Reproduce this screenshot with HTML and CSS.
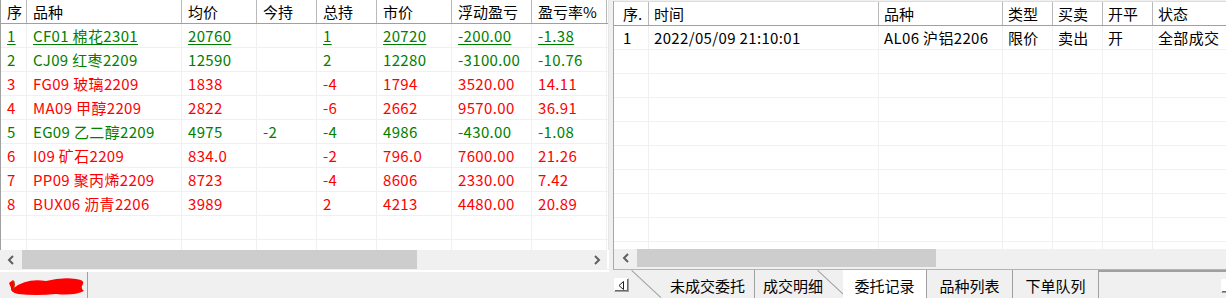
FILE: index.html
```html
<!DOCTYPE html>
<html lang="zh-CN">

<head>
    <meta charset="UTF-8" />
    <title>持仓与委托</title>
    <link rel="stylesheet" href="styles.css">
</head>

<body>
    <div class="app">
        <!-- 持仓 -->
        <div class="left">
            <div class="grid">
                <div class="row head pos-cols">
                    <div class="cell">序</div>
                    <div class="cell">品种</div>
                    <div class="cell">均价</div>
                    <div class="cell">今持</div>
                    <div class="cell">总持</div>
                    <div class="cell">市价</div>
                    <div class="cell">浮动盈亏</div>
                    <div class="cell">盈亏率%</div>
                </div>
                <div class="row pos-cols green selected">
                    <div class="cell"><u>1</u></div>
                    <div class="cell"><u>CF01 棉花2301</u></div>
                    <div class="cell"><u>20760</u></div>
                    <div class="cell"></div>
                    <div class="cell"><u>1</u></div>
                    <div class="cell"><u>20720</u></div>
                    <div class="cell"><u>-200.00</u></div>
                    <div class="cell"><u>-1.38</u></div>
                </div>
                <div class="row pos-cols green">
                    <div class="cell">2</div>
                    <div class="cell">CJ09 红枣2209</div>
                    <div class="cell">12590</div>
                    <div class="cell"></div>
                    <div class="cell">2</div>
                    <div class="cell">12280</div>
                    <div class="cell">-3100.00</div>
                    <div class="cell">-10.76</div>
                </div>
                <div class="row pos-cols red">
                    <div class="cell">3</div>
                    <div class="cell">FG09 玻璃2209</div>
                    <div class="cell">1838</div>
                    <div class="cell"></div>
                    <div class="cell">-4</div>
                    <div class="cell">1794</div>
                    <div class="cell">3520.00</div>
                    <div class="cell">14.11</div>
                </div>
                <div class="row pos-cols red">
                    <div class="cell">4</div>
                    <div class="cell">MA09 甲醇2209</div>
                    <div class="cell">2822</div>
                    <div class="cell"></div>
                    <div class="cell">-6</div>
                    <div class="cell">2662</div>
                    <div class="cell">9570.00</div>
                    <div class="cell">36.91</div>
                </div>
                <div class="row pos-cols green">
                    <div class="cell">5</div>
                    <div class="cell">EG09 乙二醇2209</div>
                    <div class="cell">4975</div>
                    <div class="cell">-2</div>
                    <div class="cell">-4</div>
                    <div class="cell">4986</div>
                    <div class="cell">-430.00</div>
                    <div class="cell">-1.08</div>
                </div>
                <div class="row pos-cols red">
                    <div class="cell">6</div>
                    <div class="cell">I09 矿石2209</div>
                    <div class="cell">834.0</div>
                    <div class="cell"></div>
                    <div class="cell">-2</div>
                    <div class="cell">796.0</div>
                    <div class="cell">7600.00</div>
                    <div class="cell">21.26</div>
                </div>
                <div class="row pos-cols red">
                    <div class="cell">7</div>
                    <div class="cell">PP09 聚丙烯2209</div>
                    <div class="cell">8723</div>
                    <div class="cell"></div>
                    <div class="cell">-4</div>
                    <div class="cell">8606</div>
                    <div class="cell">2330.00</div>
                    <div class="cell">7.42</div>
                </div>
                <div class="row pos-cols red">
                    <div class="cell">8</div>
                    <div class="cell">BUX06 沥青2206</div>
                    <div class="cell">3989</div>
                    <div class="cell"></div>
                    <div class="cell">2</div>
                    <div class="cell">4213</div>
                    <div class="cell">4480.00</div>
                    <div class="cell">20.89</div>
                </div>
                <div class="row pos-cols">
                    <div class="cell"></div><div class="cell"></div><div class="cell"></div><div class="cell"></div>
                    <div class="cell"></div><div class="cell"></div><div class="cell"></div><div class="cell"></div>
                </div>
                <div class="row pos-cols">
                    <div class="cell"></div><div class="cell"></div><div class="cell"></div><div class="cell"></div>
                    <div class="cell"></div><div class="cell"></div><div class="cell"></div><div class="cell"></div>
                </div>
            </div>

            <div class="hscroll">
                <span class="arrow arrow-left">
                    <svg width="8" height="10" viewBox="0 0 8 10"><polyline points="6,1 2,5 6,9" /></svg>
                </span>
                <div class="track"><div class="thumb thumb-pos"></div></div>
                <span class="arrow arrow-right">
                    <svg width="8" height="10" viewBox="0 0 8 10"><polyline points="2,1 6,5 2,9" /></svg>
                </span>
            </div>

            <div class="statusbar">
                <div class="acct-tab">
                    <svg width="80" height="22" viewBox="0 0 80 22">
                        <path class="mark" d="M3 9 L7 6 L9 10 L8 14 Q20 4 40 7 Q56 3 70 5 Q79 6 77 10 Q74 14 78 17 Q68 22 50 20 Q30 22 12 20 Q4 18 5 14 Z" />
                        <path class="mark-num" d="M6 8 L8 7 L8 16" />
                    </svg>
                </div>
            </div>
        </div>

        <div class="split"></div>

        <!-- 委托 -->
        <div class="right">
            <div class="frame">
                <div class="grid grid-ord">
                    <div class="row head ord-cols">
                        <div class="cell first">序.</div>
                        <div class="cell">时间</div>
                        <div class="cell">品种</div>
                        <div class="cell">类型</div>
                        <div class="cell">买卖</div>
                        <div class="cell">开平</div>
                        <div class="cell">状态</div>
                    </div>
                    <div class="row ord-cols">
                        <div class="cell first">1</div>
                        <div class="cell">2022/05/09 21:10:01</div>
                        <div class="cell">AL06 沪铝2206</div>
                        <div class="cell">限价</div>
                        <div class="cell">卖出</div>
                        <div class="cell">开</div>
                        <div class="cell">全部成交</div>
                    </div>
                    <div class="row ord-cols">
                        <div class="cell"></div><div class="cell"></div><div class="cell"></div><div class="cell"></div>
                        <div class="cell"></div><div class="cell"></div><div class="cell"></div>
                    </div>
                    <div class="row ord-cols">
                        <div class="cell"></div><div class="cell"></div><div class="cell"></div><div class="cell"></div>
                        <div class="cell"></div><div class="cell"></div><div class="cell"></div>
                    </div>
                    <div class="row ord-cols">
                        <div class="cell"></div><div class="cell"></div><div class="cell"></div><div class="cell"></div>
                        <div class="cell"></div><div class="cell"></div><div class="cell"></div>
                    </div>
                    <div class="row ord-cols">
                        <div class="cell"></div><div class="cell"></div><div class="cell"></div><div class="cell"></div>
                        <div class="cell"></div><div class="cell"></div><div class="cell"></div>
                    </div>
                    <div class="row ord-cols">
                        <div class="cell"></div><div class="cell"></div><div class="cell"></div><div class="cell"></div>
                        <div class="cell"></div><div class="cell"></div><div class="cell"></div>
                    </div>
                    <div class="row ord-cols">
                        <div class="cell"></div><div class="cell"></div><div class="cell"></div><div class="cell"></div>
                        <div class="cell"></div><div class="cell"></div><div class="cell"></div>
                    </div>
                    <div class="row ord-cols">
                        <div class="cell"></div><div class="cell"></div><div class="cell"></div><div class="cell"></div>
                        <div class="cell"></div><div class="cell"></div><div class="cell"></div>
                    </div>
                    <div class="row ord-cols">
                        <div class="cell"></div><div class="cell"></div><div class="cell"></div><div class="cell"></div>
                        <div class="cell"></div><div class="cell"></div><div class="cell"></div>
                    </div>
                    <div class="row ord-cols">
                        <div class="cell"></div><div class="cell"></div><div class="cell"></div><div class="cell"></div>
                        <div class="cell"></div><div class="cell"></div><div class="cell"></div>
                    </div>
                </div>

                <div class="hscroll hscroll-ord">
                    <span class="arrow arrow-left">
                        <svg width="8" height="10" viewBox="0 0 8 10"><polyline points="6,1 2,5 6,9" /></svg>
                    </span>
                    <div class="track"><div class="thumb thumb-ord"></div></div>
                </div>
            </div>

            <div class="tabs">
                <span class="tab-nav">
                    <svg width="7" height="9" viewBox="0 0 7 9"><polygon points="5.5,0.5 1,4.5 5.5,8.5" /></svg>
                </span>
                <div class="tab tab-first">未成交委托</div>
                <div class="tab tab-second">成交明细</div>
                <div class="tab active">委托记录</div>
                <div class="tab">品种列表</div>
                <div class="tab">下单队列</div>
                <div class="tab-rest"><span class="tab-nav tab-nav-right"></span></div>
            </div>
        </div>
    </div>
</body>

</html>
```

FILE: styles.css
```css
* {
    box-sizing: border-box;
}

html,
body {
    margin: 0;
    padding: 0;
    width: 1226px;
    height: 298px;
    overflow: hidden;
    background: #f0f0f0;
    font-family: "Noto Sans CJK SC", "Noto Sans", sans-serif;
    font-size: 15px;
    color: #000;
}

.app {
    display: flex;
    height: 298px;
}

/* ---------- grids ---------- */

.left {
    width: 609px;
    display: flex;
    flex-direction: column;
    flex-shrink: 0;
}

.grid {
    background: #ffffff;
    overflow: hidden;
}

.left .grid {
    height: 250px;
    border-left: 1px solid #a0a0a0;
    border-right: 1px solid #e6e6e6;
}

.row {
    display: grid;
    height: 24px;
    line-height: 24px;
    border-bottom: 1px solid #f0f0f0;
}

.pos-cols {
    grid-template-columns: 26px 155px 75px 60px 60px 75px 80px 75px;
}

.ord-cols {
    grid-template-columns: 35px 230px 124px 50px 50px 50px 120px;
}

.cell {
    padding: 0 6px;
    white-space: nowrap;
    overflow: hidden;
    letter-spacing: 0.35px;
    border-right: 1px solid #f0f0f0;
}

.row.head {
    line-height: 23px;
    border-bottom: 1px solid #a0a0a0;
}

.row.head .cell {
    letter-spacing: 0;
    border-right: 1px solid #b9b9b9;
}

.green {
    color: #008000;
}

.red {
    color: #ff0000;
}

.selected u {
    text-decoration-thickness: 1px;
    text-underline-offset: 2px;
}

/* ---------- scrollbars ---------- */

.hscroll {
    height: 19px;
    display: flex;
    align-items: stretch;
    background: #f0f0f0;
}

.arrow {
    display: flex;
    align-items: center;
    justify-content: center;
}

.arrow-left {
    width: 22px;
}

.arrow-right {
    width: 20px;
}

.arrow svg polyline {
    fill: none;
    stroke: #606060;
    stroke-width: 2;
}

.track {
    flex: 1;
    display: flex;
}

.thumb {
    background: #cdcdcd;
}

.thumb-pos {
    width: 395px;
}

.thumb-ord {
    width: 299px;
}

.left .hscroll {
    border-right: 2px solid #ffffff;
}

/* ---------- left status bar ---------- */

.statusbar {
    flex: 1;
    margin-top: 1px;
    border-top: 2px solid #ffffff;
    display: flex;
    align-items: stretch;
}

.acct-tab {
    width: 86px;
    margin-left: 2px;
    border-right: 1px solid #a0a0a0;
    display: flex;
    align-items: center;
    padding-left: 4px;
}

.mark {
    fill: #ff0000;
}

.mark-num {
    fill: none;
    stroke: #7a5a00;
    stroke-width: 1;
}

/* ---------- right panel ---------- */

.split {
    width: 4px;
    flex-shrink: 0;
}

.right {
    flex: 1;
    min-width: 0;
    display: flex;
    flex-direction: column;
    padding-top: 1px;
}

.frame {
    border-left: 1px solid #a8a8a8;
    border-bottom: 1px solid #b4b4b4;
    padding-bottom: 2px;
}

.grid-ord {
    height: 248px;
    border-top: 1px solid #dcdcdc;
}

.ord-cols .cell {
    padding-left: 5px;
}

.ord-cols .cell.first {
    padding-left: 9px;
}

.hscroll-ord {
    height: 18px;
}

.hscroll-ord .arrow-left {
    width: 23px;
}

/* ---------- sheet tabs ---------- */

.tabs {
    height: 28px;
    display: flex;
    align-items: stretch;
    overflow: hidden;
}

.tab-nav {
    width: 15px;
    height: 14px;
    margin: 8px 3px 0 1px;
    background: #ffffff;
    border: 1px solid #a0a0a0;
    border-top-color: #ffffff;
    border-left-color: #ffffff;
    box-shadow: inset -1px -1px 0 #696969;
    display: flex;
    align-items: center;
    justify-content: center;
}

.tab-nav polygon {
    fill: none;
    stroke: #202020;
    stroke-width: 1;
}

.tab {
    position: relative;
    padding-top: 4px;
    line-height: 24px;
    text-align: center;
    white-space: nowrap;
    border-right: 1px solid #a0a0a0;
}

.tab-first {
    width: 123px;
    padding-left: 38px;
    text-align: left;
    border-right: 1px solid #a0a0a0;
}

.tab-first::before,
.tab-second::after {
    content: "";
    position: absolute;
    top: 0;
    width: 40px;
    height: 1px;
    background: #a0a0a0;
    transform-origin: 0 0;
    transform: rotate(43deg);
}

.tab-first::before {
    left: 0;
}

.tab-second {
    width: 88px;
    padding-right: 12px;
    border-right: none;
}

.tab-second::after {
    left: 63px;
}

.tab.active {
    width: 84px;
    background: #ffffff;
}

.tab:nth-child(5),
.tab:nth-child(6) {
    width: 86px;
}

.tab-rest {
    flex: 1;
    border-top: 2px solid #a0a0a0;
    display: flex;
    justify-content: flex-end;
}

.tab-nav-right {
    margin: 7px -10px 0 0;
}
```
